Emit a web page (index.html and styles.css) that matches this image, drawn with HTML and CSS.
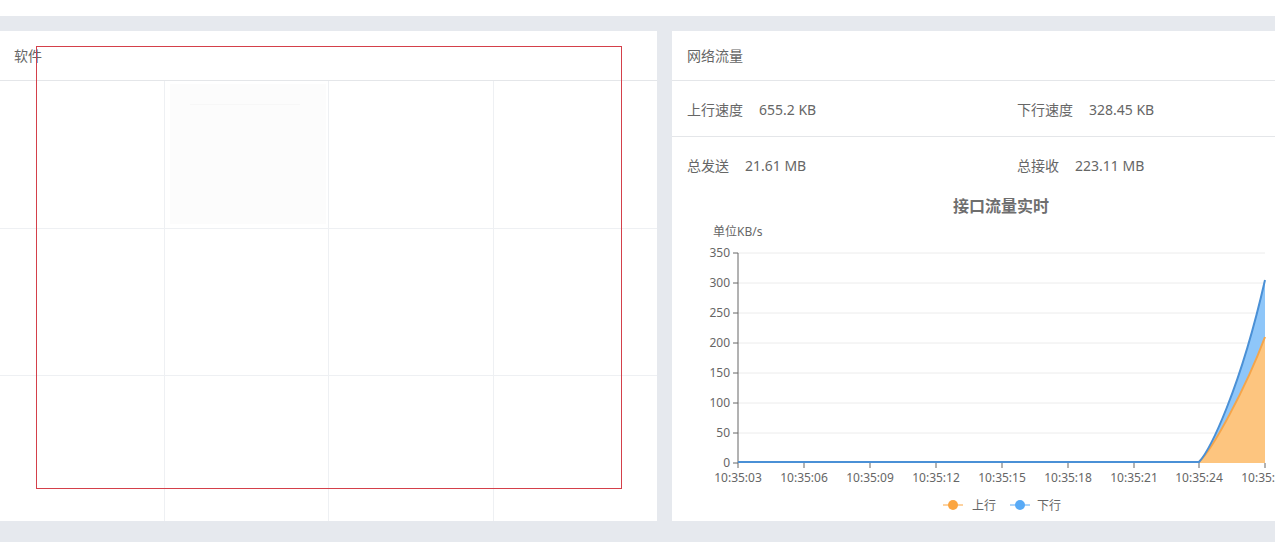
FILE: index.html
```html
<!DOCTYPE html>
<html lang="zh-CN">
  <head>
    <meta charset="UTF-8" />
    <meta name="viewport" content="width=device-width, initial-scale=1.0" />
    <title>监控</title>
    <link rel="stylesheet" href="styles.css">
  </head>
  <body>
    <div class="topbar"></div>
    <div class="page">
      <div class="panel panel-soft">
        <div class="panel-head">软件</div>
        <div class="soft-grid">
          <div class="cell"></div>
          <div class="cell"><div class="skeleton"><span></span></div></div>
          <div class="cell"></div>
          <div class="cell"></div>
          <div class="cell"></div>
          <div class="cell"></div>
          <div class="cell"></div>
          <div class="cell"></div>
          <div class="cell"></div>
          <div class="cell"></div>
          <div class="cell"></div>
          <div class="cell"></div>
        </div>
      </div>
      <div class="panel panel-net">
        <div class="panel-head">网络流量</div>
        <div class="net-row">
          <div class="net-item"><span class="label">上行速度</span><span class="value">655.2 KB</span></div>
          <div class="net-item"><span class="label">下行速度</span><span class="value">328.45 KB</span></div>
        </div>
        <div class="net-row last">
          <div class="net-item"><span class="label">总发送</span><span class="value">21.61 MB</span></div>
          <div class="net-item"><span class="label">总接收</span><span class="value">223.11 MB</span></div>
        </div>
        <svg class="net-chart" width="660" height="328" viewBox="0 0 660 328">
          <text class="chart-title" x="329" y="19" text-anchor="middle">接口流量实时</text>
          <text class="chart-unit" x="41" y="43">单位KB/s</text>

          <g class="grid">
            <line x1="66" y1="60" x2="593" y2="60" />
            <line x1="66" y1="90" x2="593" y2="90" />
            <line x1="66" y1="120" x2="593" y2="120" />
            <line x1="66" y1="150" x2="593" y2="150" />
            <line x1="66" y1="180" x2="593" y2="180" />
            <line x1="66" y1="210" x2="593" y2="210" />
            <line x1="66" y1="240" x2="593" y2="240" />
          </g>

          <g class="axis">
            <line x1="66" y1="60" x2="66" y2="270" />
            <line x1="61" y1="60" x2="66" y2="60" />
            <line x1="61" y1="90" x2="66" y2="90" />
            <line x1="61" y1="120" x2="66" y2="120" />
            <line x1="61" y1="150" x2="66" y2="150" />
            <line x1="61" y1="180" x2="66" y2="180" />
            <line x1="61" y1="210" x2="66" y2="210" />
            <line x1="61" y1="240" x2="66" y2="240" />
            <line x1="61" y1="270" x2="66" y2="270" />
            <line x1="66" y1="270" x2="66" y2="275" />
            <line x1="132" y1="270" x2="132" y2="275" />
            <line x1="198" y1="270" x2="198" y2="275" />
            <line x1="264" y1="270" x2="264" y2="275" />
            <line x1="330" y1="270" x2="330" y2="275" />
            <line x1="396" y1="270" x2="396" y2="275" />
            <line x1="462" y1="270" x2="462" y2="275" />
            <line x1="527" y1="270" x2="527" y2="275" />
            <line x1="593" y1="270" x2="593" y2="275" />
          </g>

          <g class="y-labels" text-anchor="end">
            <text x="58" y="64">350</text>
            <text x="58" y="94">300</text>
            <text x="58" y="124">250</text>
            <text x="58" y="154">200</text>
            <text x="58" y="184">150</text>
            <text x="58" y="214">100</text>
            <text x="58" y="244">50</text>
            <text x="58" y="274">0</text>
          </g>

          <g class="x-labels" text-anchor="middle">
            <text x="66" y="289">10:35:03</text>
            <text x="132" y="289">10:35:06</text>
            <text x="198" y="289">10:35:09</text>
            <text x="264" y="289">10:35:12</text>
            <text x="330" y="289">10:35:15</text>
            <text x="396" y="289">10:35:18</text>
            <text x="462" y="289">10:35:21</text>
            <text x="527" y="289">10:35:24</text>
            <text x="593" y="289">10:35:27</text>
          </g>

          <!-- 下行 -->
          <path class="area-down" d="M66 270 L527 270 C538 257 568 197 593 87 L593 270 Z" />
          <!-- 上行 -->
          <path class="area-up" d="M66 270 L527 270 C540 257 573 197 593 144 L593 270 Z" />
          <path class="line-up" d="M66 269 L527 269 C540 257 573 197 593 144" />
          <path class="line-down" d="M66 269 L527 269 C538 257 568 197 593 87" />

          <g class="legend">
            <line class="leg-up" x1="271" y1="312" x2="291" y2="312" />
            <circle class="dot-up" cx="281" cy="312" r="5" />
            <text x="300" y="317">上行</text>
            <line class="leg-down" x1="338" y1="312" x2="358" y2="312" />
            <circle class="dot-down" cx="348" cy="312" r="5" />
            <text x="365" y="317">下行</text>
          </g>
        </svg>
      </div>
    </div>
    <div class="select-box"></div>
  </body>
</html>
```

FILE: styles.css
```css
body {
  margin: 0;
  padding: 0;
  background-color: #e6e9ee;
  font-family: "Noto Sans", "Noto Sans CJK SC", sans-serif;
  font-size: 14px;
  color: #666;
  overflow: hidden;
}
.topbar {
  height: 16px;
  background-color: #fff;
}
.page {
  display: flex;
  gap: 15px;
  width: 1332px;
  padding-top: 15px;
}
.panel {
  background-color: #fff;
  height: 490px;
  flex: none;
  display: flex;
  flex-direction: column;
}
.panel-soft {
  width: 657px;
}
.panel-net {
  width: 660px;
}
.panel-head {
  height: 49px;
  line-height: 49px;
  padding: 0 14px;
  border-bottom: 1px solid #e4e6e9;
  color: #666;
}
.panel-net .panel-head {
  padding: 0 15px;
}
.soft-grid {
  display: grid;
  grid-template-columns: 165px 164px 165px 163px;
  grid-template-rows: 148px 147px 145px;
}
.cell {
  box-sizing: border-box;
  border-right: 1px solid #eef0f3;
  border-bottom: 1px solid #eef0f3;
}
.cell:nth-child(4n) {
  border-right: none;
}
.cell:nth-child(n+9) {
  border-bottom: none;
}
.skeleton {
  margin: 3px 2px 4px 5px;
  padding-top: 20px;
  height: 120px;
  background-color: #fcfcfc;
}
.skeleton span {
  display: block;
  margin-left: 20px;
  width: 110px;
  height: 1px;
  background-color: #f7f7f7;
}
.net-row {
  display: flex;
  height: 55px;
  align-items: center;
  border-bottom: 1px solid #e4e6e9;
}
.net-row.last {
  border-bottom: none;
  height: 56px;
}
.net-item {
  width: 50%;
  box-sizing: border-box;
  padding-left: 15px;
}
.net-item .label {
  color: #666;
  margin-right: 16px;
}
.net-item .value {
  color: #666;
}
.net-chart {
  display: block;
  font-family: "Noto Sans", "Noto Sans CJK SC", sans-serif;
}
.chart-title {
  font-size: 16px;
  font-weight: bold;
  fill: #6e6e6e;
}
.chart-unit {
  font-size: 12px;
  fill: #666;
}
.grid line {
  stroke: #ececec;
  stroke-width: 1;
}
.axis line {
  stroke: #666;
  stroke-width: 1;
}
.y-labels text,
.x-labels text {
  font-size: 12px;
  fill: #666;
}
.area-down {
  fill: #8ec6f9;
}
.area-up {
  fill: #fdc57f;
}
.line-up {
  fill: none;
  stroke: #f5a54a;
  stroke-width: 2;
}
.line-down {
  fill: none;
  stroke: #4a90d6;
  stroke-width: 2;
}
.legend text {
  font-size: 12px;
  fill: #666;
}
.leg-up {
  stroke: #fba540;
  stroke-width: 1;
}
.leg-down {
  stroke: #58aaf6;
  stroke-width: 1;
}
.dot-up {
  fill: #fba540;
}
.dot-down {
  fill: #58aaf6;
}
.select-box {
  position: absolute;
  top: 46px;
  left: 36px;
  width: 584px;
  height: 441px;
  border: 1px solid #d4404a;
}
```
